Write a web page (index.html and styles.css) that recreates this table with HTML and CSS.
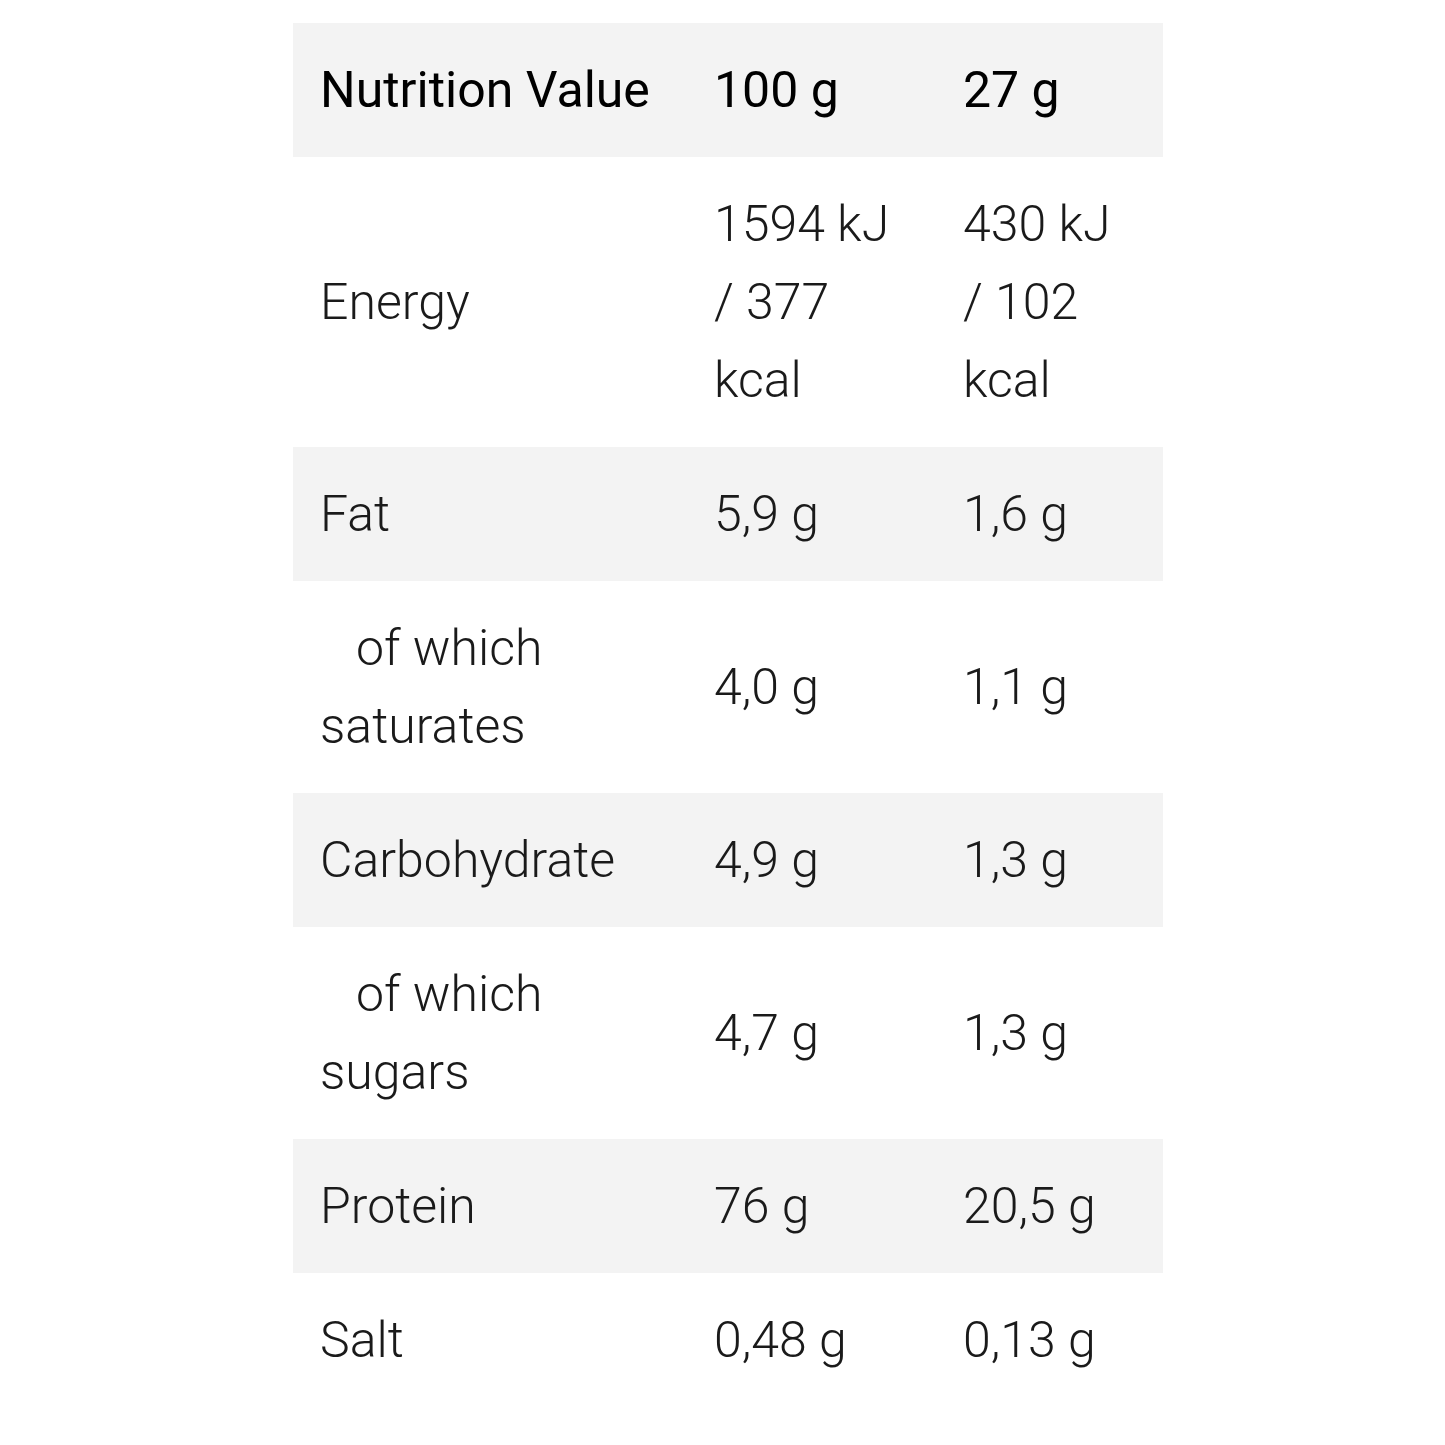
FILE: index.html
```html
<!DOCTYPE html>
<html>
<head>
<meta charset="utf-8">
<link rel="stylesheet" href="styles.css">
</head>
<body>
<div class="page">
<table class="nutrition">
  <colgroup>
    <col class="c1"><col class="c2"><col class="c3">
  </colgroup>
  <thead>
    <tr class="shade">
      <th>Nutrition Value</th><th>100 g</th><th>27 g</th>
    </tr>
  </thead>
  <tbody>
    <tr><td>Energy</td><td>1594 kJ / 377 kcal</td><td>430 kJ / 102 kcal</td></tr>
    <tr class="shade"><td>Fat</td><td>5,9 g</td><td>1,6 g</td></tr>
    <tr><td class="sub">of which saturates</td><td>4,0 g</td><td>1,1 g</td></tr>
    <tr class="shade"><td>Carbohydrate</td><td>4,9 g</td><td>1,3 g</td></tr>
    <tr><td class="sub">of which sugars</td><td>4,7 g</td><td>1,3 g</td></tr>
    <tr class="shade"><td>Protein</td><td>76 g</td><td>20,5 g</td></tr>
    <tr><td>Salt</td><td>0,48 g</td><td>0,13 g</td></tr>
  </tbody>
</table>
</div>
</body>
</html>
```
FILE: styles.css
```css
html, body {
  margin: 0;
  background: #ffffff;
}
.page {
  padding: 23px 0 0 293px;
}
.nutrition {
  border-collapse: collapse;
  table-layout: fixed;
  width: 870px;
  font-family: Roboto, "Liberation Sans", sans-serif;
  font-size: 50px;
  line-height: 78px;
  color: #1a1a1a;
}
.c1 { width: 394px; }
.c2 { width: 249px; }
.c3 { width: 227px; }
.nutrition th,
.nutrition td {
  padding: 28px 28px 28px 27px;
  text-align: left;
  vertical-align: middle;
}
.nutrition th {
  font-weight: 400;
  color: #000;
}
.nutrition td {
  font-weight: 300;
}
.shade {
  background: #f3f3f3;
}
.sub {
  text-indent: 36px;
}
```
